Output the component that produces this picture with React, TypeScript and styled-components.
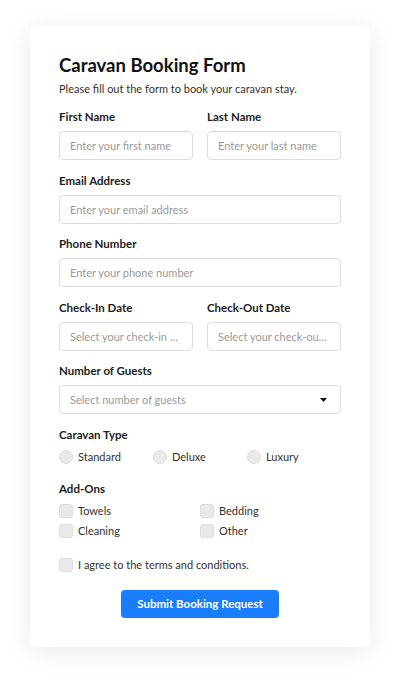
import styled, { createGlobalStyle } from 'styled-components';

const GlobalStyle = createGlobalStyle`
  html, body {
    margin: 0;
    padding: 0;
    background: #ffffff;
  }
  body {
    font-family: Lato, 'Open Sans', sans-serif;
    color: #222;
  }
  * {
    box-sizing: border-box;
  }
`;

const Page = styled.div`
  padding: 26px 30px 34px;
`;

const Card = styled.form`
  background: #fff;
  border-radius: 6px;
  box-shadow: 0 4px 28px rgba(0, 0, 0, 0.09);
  padding: 28px 29px 29px;
`;

const Title = styled.h1`
  margin: 0;
  font-size: 18.5px;
  line-height: 22px;
  font-weight: 700;
  color: #111;
`;

const Subtitle = styled.p`
  margin: 6px 0 14px;
  font-size: 11px;
  line-height: 14px;
  color: #333;
`;

const Row = styled.div`
  display: grid;
  grid-template-columns: 1fr 1fr;
  column-gap: 14px;
`;

const Group = styled.div`
  margin-bottom: 13.5px;
  min-width: 0;
`;

const Label = styled.label`
  display: block;
  font-size: 11.5px;
  line-height: 14px;
  font-weight: 700;
  color: #222;
  margin-bottom: 7px;
`;

const fieldCss = `
  display: block;
  width: 100%;
  height: 29px;
  border: 1px solid #dcdcdc;
  border-radius: 4px;
  padding: 0 10px;
  font-family: inherit;
  font-size: 11px;
  color: #333;
  background: #fff;
  outline: none;
`;

const Input = styled.input`
  ${fieldCss}
  text-overflow: ellipsis;
  &::placeholder {
    color: #999;
  }
`;

const SelectWrap = styled.div`
  position: relative;
`;

const Select = styled.select`
  ${fieldCss}
  appearance: none;
  color: #999;
`;

const Caret = styled.svg`
  position: absolute;
  right: 14px;
  top: 13px;
  pointer-events: none;
`;

const OptionGrid = styled.div<{ $cols: number }>`
  display: grid;
  grid-template-columns: repeat(${(p) => p.$cols}, 1fr);
  margin-top: -2px;
`;

const Choice = styled.label`
  display: flex;
  align-items: center;
  gap: 5px;
  height: 20px;
  font-size: 11px;
  color: #333;
`;

const Radio = styled.input`
  appearance: none;
  margin: 0;
  width: 14px;
  height: 14px;
  border-radius: 50%;
  background: #e9e9e9;
  border: 1px solid #dedede;
`;

const Check = styled.input`
  appearance: none;
  margin: 0;
  width: 14px;
  height: 14px;
  border-radius: 3px;
  background: #e9e9e9;
  border: 1px solid #dedede;
`;

const RadioGroup = styled.div`
  margin-bottom: 15px;
`;

const Terms = styled(Choice)`
  margin: 14px 0 15px;
`;

const ButtonRow = styled.div`
  display: flex;
  justify-content: center;
`;

const Submit = styled.button`
  height: 28px;
  padding: 0 16px;
  border: none;
  border-radius: 4px;
  background: #1a7dfb;
  color: #fff;
  font-family: inherit;
  font-size: 11.5px;
  font-weight: 700;
  cursor: pointer;
`;

const App = () => (
  <Page>
    <GlobalStyle />
    <Card onSubmit={(e) => e.preventDefault()}>
      <Title>Caravan Booking Form</Title>
      <Subtitle>Please fill out the form to book your caravan stay.</Subtitle>

      <Row>
        <Group>
          <Label>First Name</Label>
          <Input placeholder="Enter your first name" />
        </Group>
        <Group>
          <Label>Last Name</Label>
          <Input placeholder="Enter your last name" />
        </Group>
      </Row>

      <Group>
        <Label>Email Address</Label>
        <Input type="email" placeholder="Enter your email address" />
      </Group>

      <Group>
        <Label>Phone Number</Label>
        <Input type="tel" placeholder="Enter your phone number" />
      </Group>

      <Row>
        <Group>
          <Label>Check-In Date</Label>
          <Input placeholder="Select your check-in date" />
        </Group>
        <Group>
          <Label>Check-Out Date</Label>
          <Input placeholder="Select your check-out date" />
        </Group>
      </Row>

      <Group>
        <Label>Number of Guests</Label>
        <SelectWrap>
          <Select defaultValue="">
            <option value="" disabled>
              Select number of guests
            </option>
            <option value="1">1</option>
            <option value="2">2</option>
            <option value="3">3</option>
            <option value="4">4</option>
          </Select>
          <Caret width="7" height="4" viewBox="0 0 7 4">
            <path d="M0 0h7L3.5 4z" fill="#111" />
          </Caret>
        </SelectWrap>
      </Group>

      <RadioGroup>
        <Label>Caravan Type</Label>
        <OptionGrid $cols={3}>
          {['Standard', 'Deluxe', 'Luxury'].map((t) => (
            <Choice key={t}>
              <Radio type="radio" name="type" />
              {t}
            </Choice>
          ))}
        </OptionGrid>
      </RadioGroup>

      <div>
        <Label>Add-Ons</Label>
        <OptionGrid $cols={2}>
          {['Towels', 'Bedding', 'Cleaning', 'Other'].map((t) => (
            <Choice key={t}>
              <Check type="checkbox" />
              {t}
            </Choice>
          ))}
        </OptionGrid>
      </div>

      <Terms>
        <Check type="checkbox" />
        I agree to the terms and conditions.
      </Terms>

      <ButtonRow>
        <Submit type="submit">Submit Booking Request</Submit>
      </ButtonRow>
    </Card>
  </Page>
);

export default App;
